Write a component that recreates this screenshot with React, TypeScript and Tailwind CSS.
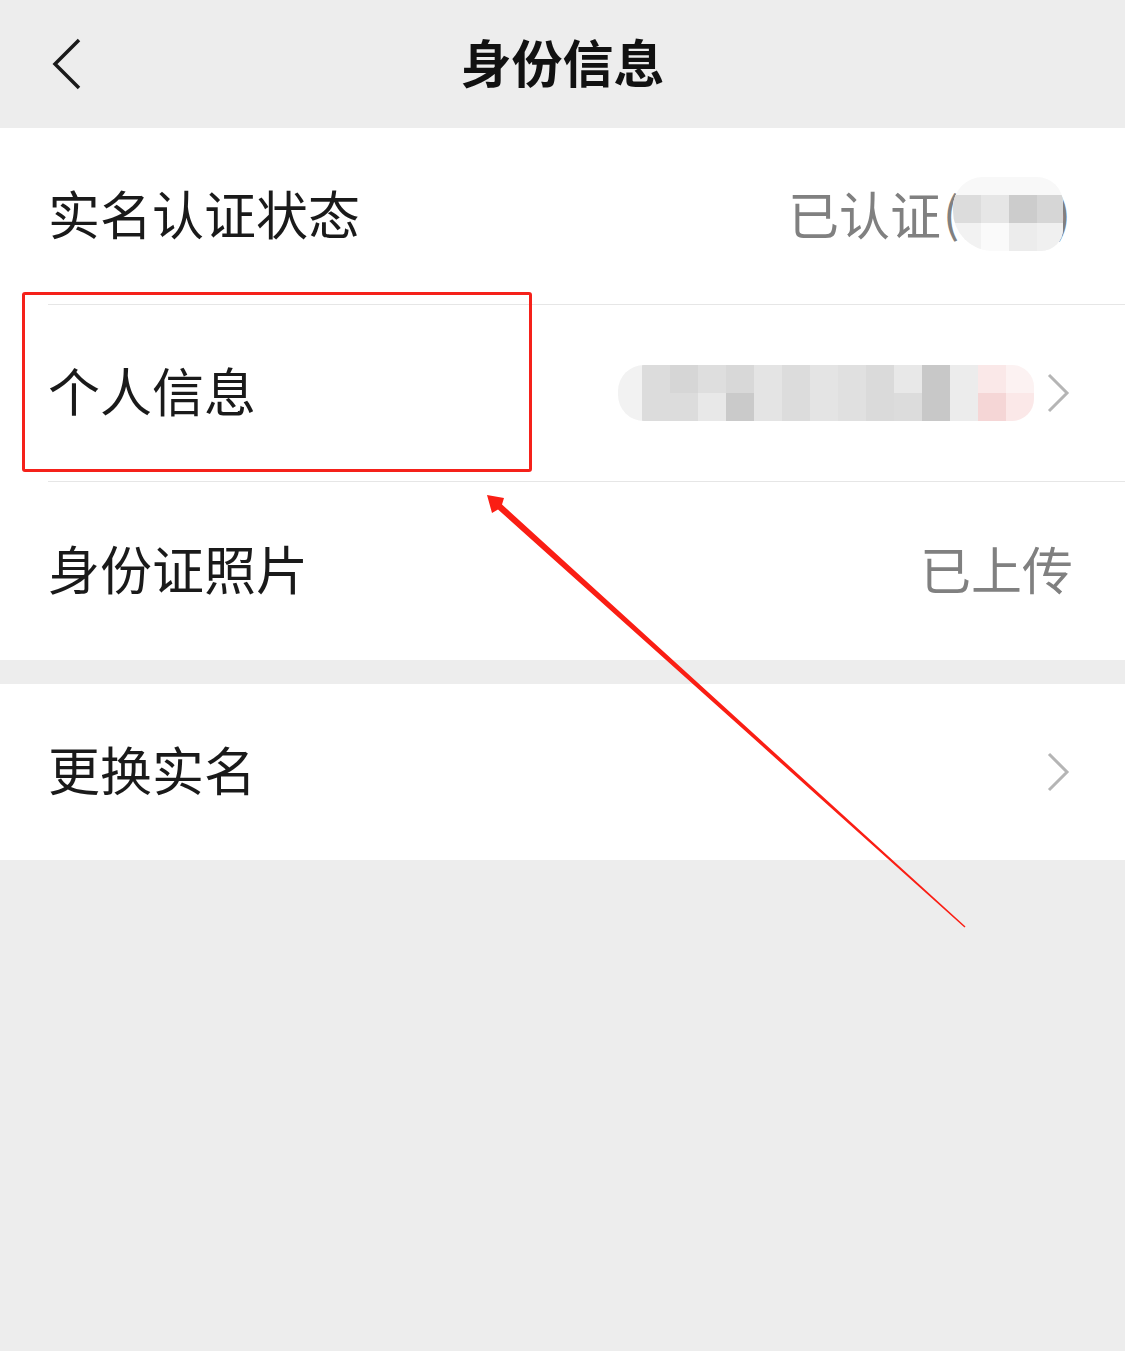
import React from "react"

const topRow = ["#dcdcdc", "#d6d6d6", "#dedede", "#d8d8d8", "#e4e4e4", "#dcdcdc", "#e4e4e4", "#e0e0e0", "#dadada", "#e8e8e8", "#c8c8c8", "#ececec", "#fae8e8", "#fcf2f2"]
const bottomRow = ["#dcdcdc", "#dcdcdc", "#e8e8e8", "#cacaca", "#e4e4e4", "#dcdcdc", "#e4e4e4", "#e0e0e0", "#dadada", "#dcdcdc", "#c8c8c8", "#ececec", "#f5d6d6", "#fbe8e8"]

function Chevron() {
  return (
    <svg width="26" height="40" viewBox="0 0 26 40" className="shrink-0 mt-[5px]">
      <path d="M4 2 L22 20 L4 38" fill="none" stroke="#b5b5b5" strokeWidth="3" />
    </svg>
  )
}

function Divider() {
  return <div className="ml-[48px] h-px bg-[#e6e6e6]" />
}

export default function App() {
  return (
    <div
      className="relative w-[1125px] h-[1351px] bg-[#ededed] overflow-hidden"
      style={{ fontFamily: '"Noto Sans CJK SC", "Noto Sans", sans-serif' }}
    >
      {/* header */}
      <header className="relative h-[128px] flex items-center justify-center pb-[6px]">
        <button className="absolute left-[48px] top-[36px]">
          <svg width="36" height="56" viewBox="0 0 36 56">
            <path d="M31 4 L7 28 L31 52" fill="none" stroke="#1a1a1a" strokeWidth="3.5" />
          </svg>
        </button>
        <h1 className="text-[51px] leading-none font-bold text-[#111]">身份信息</h1>
      </header>

      {/* identity rows */}
      <section className="bg-white">
        <div className="h-[176px] flex items-center justify-between pl-[48px] pr-[52px] pb-[6px]">
          <span className="text-[52px] leading-none text-[#1a1a1a]">实名认证状态</span>
          <div className="flex items-center">
            <span className="text-[51px] leading-none text-[#808080]">已认证</span>
            <div className="relative w-[132px] h-[76px]">
              <span className="absolute left-[2px] top-[12px] text-[48px] leading-none text-[#808080]">(</span>
              <span className="absolute right-[2px] top-[12px] text-[48px] leading-none text-[#808080]">)</span>
              <div className="absolute left-[12px] top-[2px] w-[110px] h-[74px] rounded-tl-[30px] rounded-tr-[26px] rounded-bl-[40px] rounded-br-[22px] bg-[#f8f8f8] overflow-hidden">
                <div className="absolute left-0 top-[18px] flex">
                  <div className="w-[28px] h-[28px] bg-[#dcdcdc]" />
                  <div className="w-[28px] h-[28px] bg-[#e6e6e6]" />
                  <div className="w-[28px] h-[28px] bg-[#cccccc]" />
                  <div className="w-[28px] h-[28px] bg-[#d6d6d6]" />
                </div>
                <div className="absolute left-0 top-[46px] flex">
                  <div className="w-[28px] h-[28px] bg-[#f2f2f2]" />
                  <div className="w-[28px] h-[28px] bg-[#fafafa]" />
                  <div className="w-[28px] h-[28px] bg-[#ececec]" />
                  <div className="w-[28px] h-[28px] bg-[#f0f0f0]" />
                </div>
              </div>
            </div>
          </div>
        </div>
        <Divider />
        <div className="h-[176px] flex items-center justify-between pl-[48px] pr-[54px] pb-[6px]">
          <span className="text-[52px] leading-none text-[#1a1a1a]">个人信息</span>
          <div className="flex items-center gap-[11px]">
            <div className="flex h-[56px] mt-[5px] rounded-l-[26px] rounded-r-[22px] overflow-hidden">
              <div className="w-[24px] bg-[#f2f2f2]" />
              <div className="flex flex-col">
                <div className="flex">
                  {topRow.map((c, i) => (
                    <div key={i} className="w-[28px] h-[28px]" style={{ backgroundColor: c }} />
                  ))}
                </div>
                <div className="flex">
                  {bottomRow.map((c, i) => (
                    <div key={i} className="w-[28px] h-[28px]" style={{ backgroundColor: c }} />
                  ))}
                </div>
              </div>
            </div>
            <Chevron />
          </div>
        </div>
        <Divider />
        <div className="h-[178px] flex items-center justify-between pl-[48px] pr-[52px] pb-[6px]">
          <span className="text-[52px] leading-none text-[#1a1a1a]">身份证照片</span>
          <span className="text-[51px] leading-none text-[#808080]">已上传</span>
        </div>
      </section>

      <section className="mt-[24px] bg-white">
        <div className="h-[176px] flex items-center justify-between pl-[48px] pr-[54px] pb-[6px]">
          <span className="text-[52px] leading-none text-[#1a1a1a]">更换实名</span>
          <Chevron />
        </div>
      </section>

      {/* annotation: highlight box */}
      <div className="absolute left-[22px] top-[292px] w-[510px] h-[180px] border-[3px] border-[#f5211a] rounded-[3px]" />

      {/* annotation: arrow */}
      <svg className="absolute left-0 top-0 pointer-events-none" width="1125" height="1351" viewBox="0 0 1125 1351">
        <polygon
          points="487,495 504,498 502,504.5 965.5,926.5 964.5,927.5 498,509.5 492,513"
          fill="#fa1e14"
        />
      </svg>
    </div>
  )
}
